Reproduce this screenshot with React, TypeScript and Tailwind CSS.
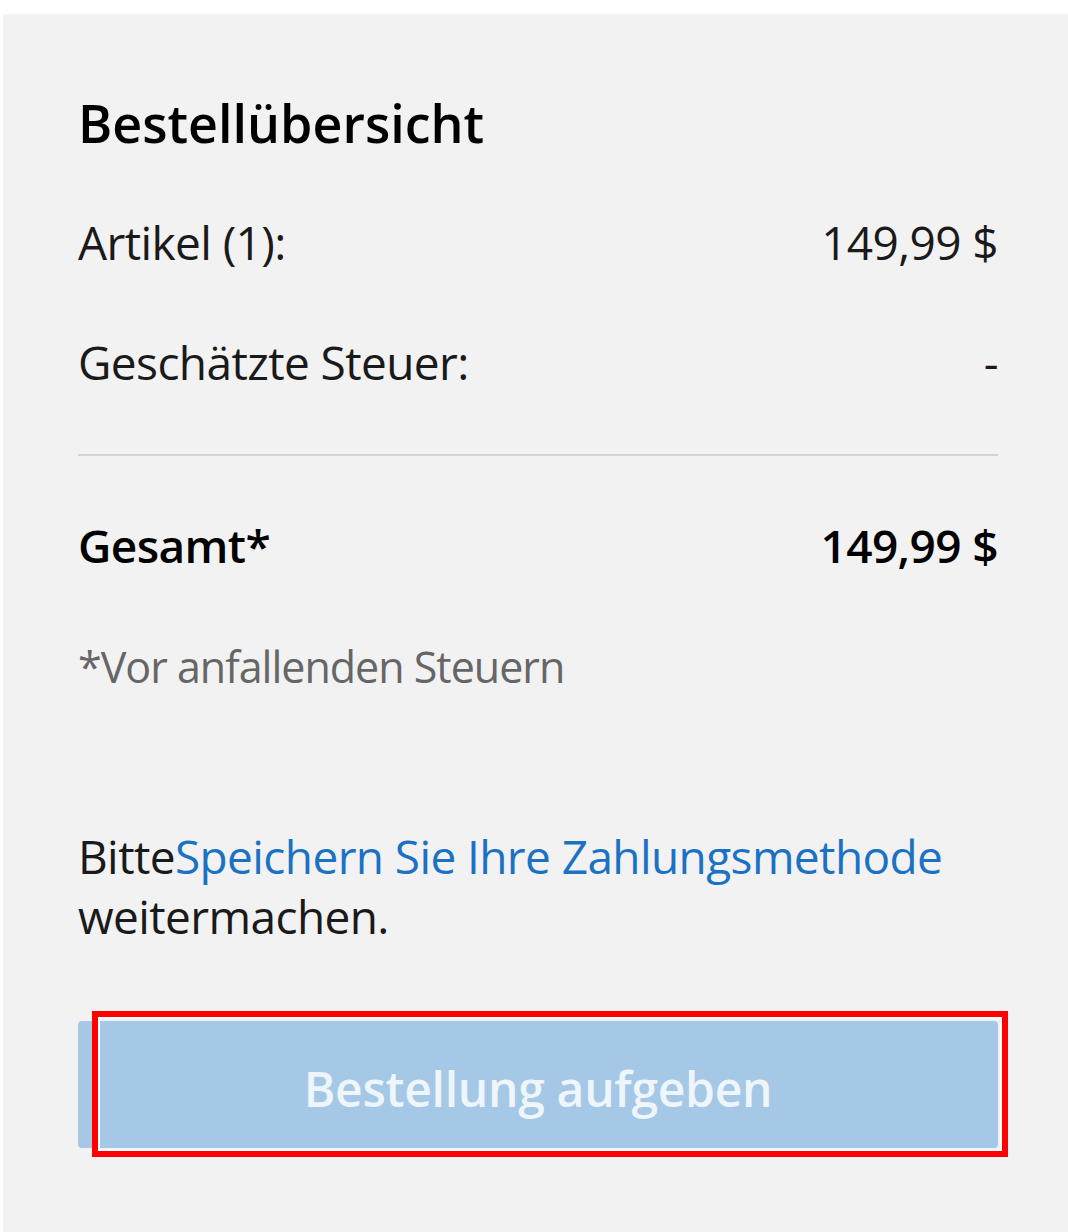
export default function App() {
  return (
    <div className="min-h-screen bg-white pl-[3px] pt-[14px]" style={{ fontFamily: '"Open Sans", "Noto Sans", sans-serif' }}>
      <div className="min-h-[1218px] bg-[#f2f2f2] pl-[75px] pr-[70px] pt-[83px]">
        <h1 className="text-[52px] font-semibold leading-none text-black">Bestellübersicht</h1>

        <div className="mt-[70px] flex justify-between text-[46px] leading-none tracking-[-0.6px] text-[#1a1a1a]">
          <span>Artikel (1):</span>
          <span>149,99 $</span>
        </div>

        <div className="mt-[74px] flex justify-between text-[46px] leading-none tracking-[-0.6px] text-[#1a1a1a]">
          <span>Geschätzte Steuer:</span>
          <span>-</span>
        </div>

        <div className="mt-[69px] h-[2px] bg-[#d4d4d4]" />

        <div className="mt-[66px] flex justify-between text-[46px] font-semibold leading-none tracking-[-0.6px] text-black">
          <span>Gesamt*</span>
          <span>149,99 $</span>
        </div>

        <p className="mt-[77px] text-[43px] leading-none tracking-[-1px] text-[#666666]">*Vor anfallenden Steuern</p>

        <p className="mt-[138px] text-[46px] leading-[60px] tracking-[-0.6px] text-[#1a1a1a]">
          Bitte<a className="text-[#1b72c4]">Speichern Sie Ihre Zahlungsmethode</a> weitermachen.
        </p>

        <div className="relative mt-[75px]">
          <button
            disabled
            className="flex h-[127px] w-full items-center justify-center rounded-[4px] bg-[#a4c8e6] pt-[8px] text-[48px] font-semibold tracking-[-0.3px] text-[#eef5fb]"
          >
            Bestellung aufgeben
          </button>
          <div className="pointer-events-none absolute -bottom-[9px] -right-[10px] -top-[10px] left-[14px] border-[6px] border-[#ff0000]">
            <div className="h-full w-full border-2 border-white" />
          </div>
        </div>
      </div>
    </div>
  );
}
